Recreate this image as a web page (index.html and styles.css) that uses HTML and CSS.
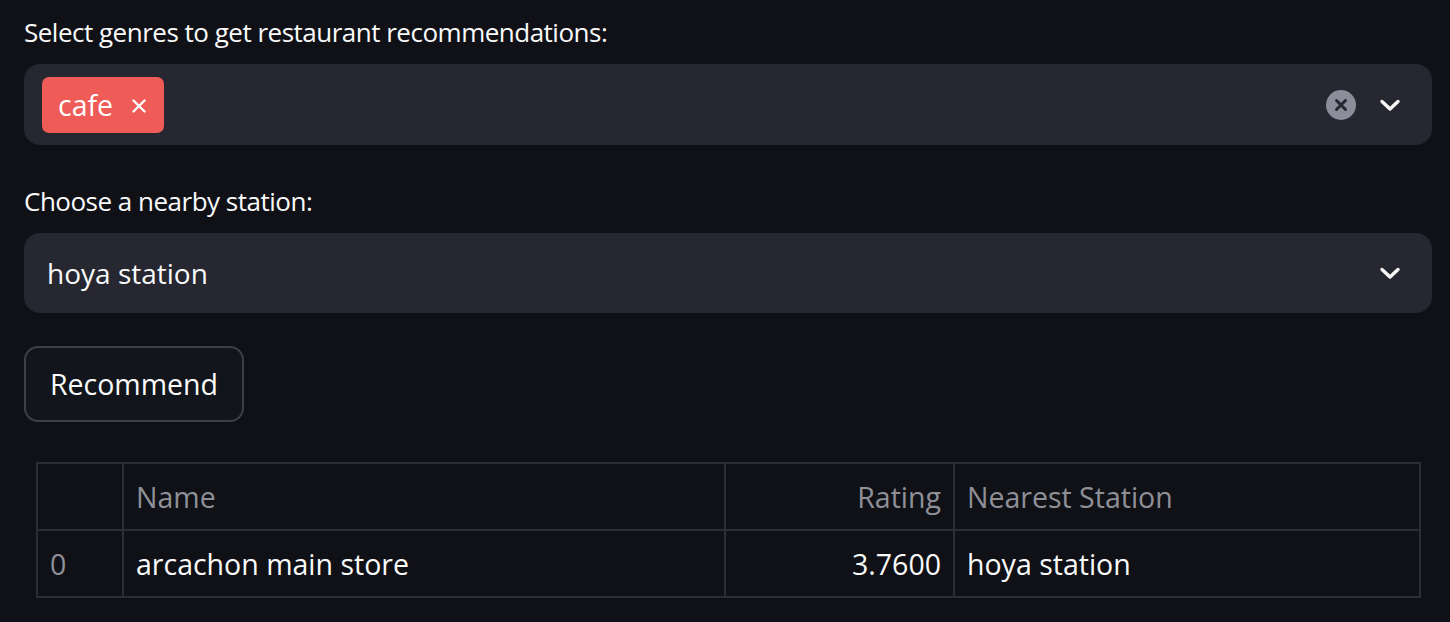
FILE: index.html
```html
<!DOCTYPE html>
<html>
<head>
<meta charset="utf-8">
<link rel="stylesheet" href="styles.css">
</head>
<body>
<main class="app">
  <div class="field">
    <label class="label">Select genres to get restaurant recommendations:</label>
    <div class="select multi">
      <div class="values">
        <span class="tag">cafe <svg class="tag-x" width="14" height="14" viewBox="0 0 14 14"><path d="M1.5 1.5 L12.5 12.5 M12.5 1.5 L1.5 12.5" stroke="#fff" stroke-width="2.4" stroke-linecap="round"/></svg></span>
      </div>
      <div class="icons">
        <svg class="clear" width="30" height="30" viewBox="0 0 30 30"><circle cx="15" cy="15" r="15" fill="#8b8d9b"/><path d="M10.5 10.5 L19.5 19.5 M19.5 10.5 L10.5 19.5" stroke="#262730" stroke-width="3" stroke-linecap="round"/></svg>
        <svg class="chev" width="24" height="24" viewBox="0 0 24 24"><path d="M4 8.5 L12 16 L20 8.5" fill="none" stroke="#fafafa" stroke-width="3.4" stroke-linecap="round" stroke-linejoin="round"/></svg>
      </div>
    </div>
  </div>
  <div class="field">
    <label class="label">Choose a nearby station:</label>
    <div class="select single">
      <div class="values"><span class="value">hoya station</span></div>
      <div class="icons">
        <svg class="chev" width="24" height="24" viewBox="0 0 24 24"><path d="M4 8.5 L12 16 L20 8.5" fill="none" stroke="#fafafa" stroke-width="3.4" stroke-linecap="round" stroke-linejoin="round"/></svg>
      </div>
    </div>
  </div>
  <div class="btn-row"><button class="btn">Recommend</button></div>
  <div class="table-wrap">
    <table class="df">
      <colgroup><col class="c0"><col class="c1"><col class="c2"><col class="c3"></colgroup>
      <thead>
        <tr><th></th><th>Name</th><th class="num">Rating</th><th>Nearest Station</th></tr>
      </thead>
      <tbody>
        <tr><td class="idx">0</td><td>arcachon main store</td><td class="num">3.7600</td><td>hoya station</td></tr>
      </tbody>
    </table>
  </div>
</main>
</body>
</html>
```
FILE: styles.css
```css
* { box-sizing: border-box; }
html, body { margin: 0; padding: 0; }
body {
  background: #0f1117;
  color: #fafafa;
  font-family: "Open Sans", "Noto Sans", sans-serif;
  width: 1450px;
  height: 622px;
  overflow: hidden;
}
.app {
  padding: 17px 18px 0 24px;
  display: flex;
  flex-direction: column;
}
.field { display: flex; flex-direction: column; }
.label {
  font-size: 26px;
  line-height: 30px;
  letter-spacing: -0.5px;
  height: 47px;
}
.select {
  background: #262730;
  border-radius: 16px;
  height: 81px;
  display: flex;
  align-items: center;
  justify-content: space-between;
  padding: 0 30px 0 18px;
}
.multi { margin-bottom: 41px; }
.single { height: 80px; padding-left: 23px; margin-bottom: 33px; }
.values { display: flex; align-items: center; }
.tag {
  background: #ef5b56;
  color: #fff;
  border-radius: 7px;
  height: 56px;
  display: inline-flex;
  align-items: center;
  padding: 0 18px 0 16px;
  font-size: 28.5px;
  letter-spacing: 0;
}
.tag-x { margin-left: 19px; margin-top: 2px; }
.icons { display: flex; align-items: center; gap: 22px; }
.value { font-size: 28px; letter-spacing: 0; }
.btn-row { display: flex; }
.btn {
  background: #12151c;
  color: #fafafa;
  border: 2px solid #3d3f48;
  border-radius: 14px;
  height: 76px;
  width: 220px;
  font-family: inherit;
  font-size: 28.5px;
  letter-spacing: 0;
  padding: 0;
}
.table-wrap { margin: 40px 0 0 12px; }
.df {
  border-collapse: collapse;
  width: 1383px;
  table-layout: fixed;
  border: 2px solid #2c2e36;
}
.c0 { width: 86px; }
.c1 { width: 602px; }
.c2 { width: 229px; }
.c3 { width: 466px; }
.df th, .df td {
  border: 2px solid #2c2e36;
  height: 67px;
  padding: 0 12px;
  text-align: left;
  font-size: 28.5px;
  letter-spacing: 0;
}
.df th { color: #8f9097; font-weight: 400; }
.df td { color: #fafafa; }
.df .num { text-align: right; }
.df td.idx { color: #8f9097; }
```
